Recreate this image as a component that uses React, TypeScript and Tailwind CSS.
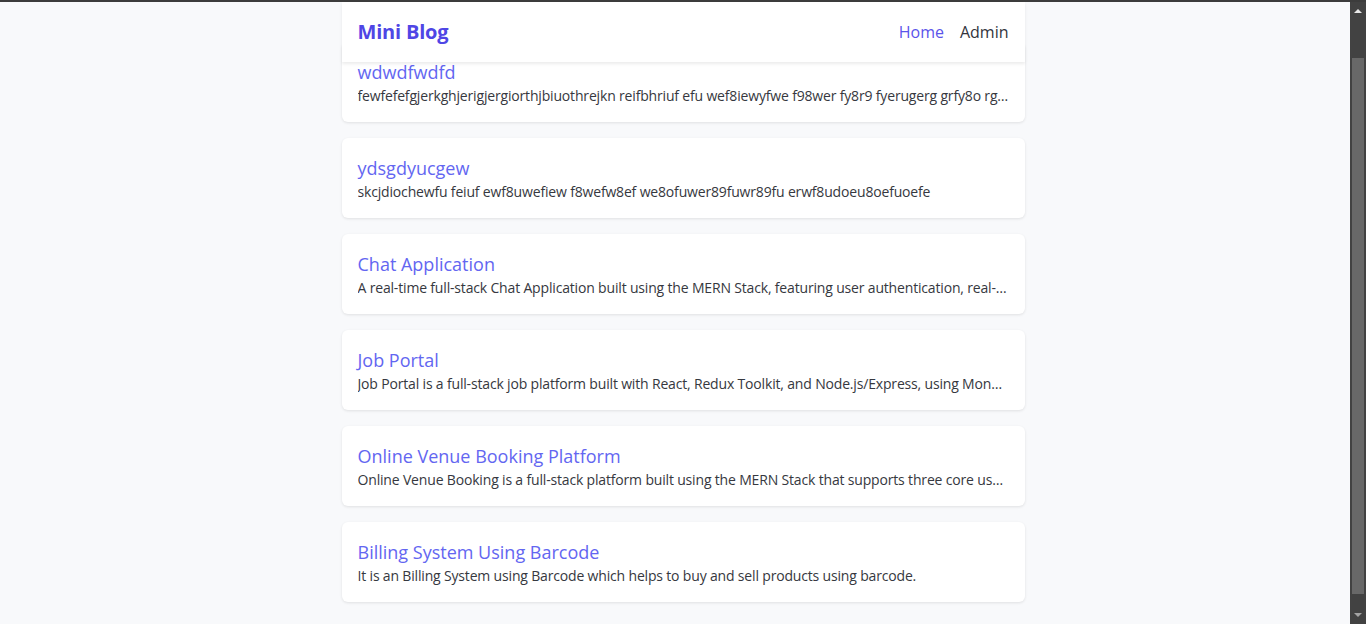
import React from "react";

const posts = [
    {
        title: "wdwdfwdfd",
        body: "fewfefefgjerkghjerigjergiorthjbiuothrejkn reifbhriuf efu wef8iewyfwe f98wer fy8r9 fyerugerg grfy8o rgyw8e7r ywerf8y7wer8f7 yerf",
    },
    {
        title: "ydsgdyucgew",
        body: "skcjdiochewfu feiuf ewf8uwefiew f8wefw8ef we8ofuwer89fuwr89fu erwf8udoeu8oefuoefe",
    },
    {
        title: "Chat Application",
        body: "A real-time full-stack Chat Application built using the MERN Stack, featuring user authentication, real-time messaging with Socket.io",
    },
    {
        title: "Job Portal",
        body: "Job Portal is a full-stack job platform built with React, Redux Toolkit, and Node.js/Express, using MongoDB for storage",
    },
    {
        title: "Online Venue Booking Platform",
        body: "Online Venue Booking is a full-stack platform built using the MERN Stack that supports three core user roles",
    },
    {
        title: "Billing System Using Barcode",
        body: "It is an Billing System using Barcode which helps to buy and sell products using barcode.",
    },
];

function Scrollbar() {
    return (
        <div className="fixed right-0 top-[2px] bottom-0 flex w-[16px] flex-col items-center bg-[#424242]">
            {/* up arrow */}
            <div className="flex h-[17px] w-full items-center justify-center">
                <svg width="8" height="5" viewBox="0 0 8 5">
                    <path d="M0 5 L4 1 L8 5 Z" fill="#e8e8e8" />
                </svg>
            </div>
            <div className="flex-1 w-full px-[2px] pt-[39px] pb-[13px]">
                <div className="h-full w-full bg-[#686868]"></div>
            </div>
            <div className="flex h-[17px] w-full items-center justify-center">
                <svg width="8" height="5" viewBox="0 0 8 5">
                    <path d="M0 0 L8 0 L4 4 Z" fill="#a3a3a3" />
                </svg>
            </div>
        </div>
    );
}

export default function App() {
    return (
        <div className="h-[624px] overflow-hidden bg-[#f8f9fb] font-['Open_Sans',sans-serif]">
            <div className="h-[2px] bg-[#3c3c3c]"></div>

            <div className="mx-auto w-1/2">
                {/* Navbar */}
                <header className="relative z-10 flex h-[60px] items-center justify-between bg-white px-4 shadow-[0_2px_3px_rgba(0,0,0,0.08)]">
                    <h1 className="text-xl font-bold tracking-[-0.2px] text-[#4f46e5]">Mini Blog</h1>
                    <nav className="flex items-center gap-4 text-base">
                        <a className="text-[#5b54ea]">Home</a>
                        <a className="text-[#33343d]">Admin</a>
                    </nav>
                </header>

                {/* Posts */}
                <div className="-mt-[20px] space-y-4">
                    {posts.map((p) => (
                        <div key={p.title} className="rounded-md bg-white p-4 shadow-[0_1px_3px_rgba(0,0,0,0.1)]">
                            <h2 className="text-lg text-[#6366f1]">{p.title}</h2>
                            <p className="truncate text-sm tracking-[-0.17px] text-[#363840]">{p.body}</p>
                        </div>
                    ))}
                </div>
            </div>

            <Scrollbar />
        </div>
    );
}
